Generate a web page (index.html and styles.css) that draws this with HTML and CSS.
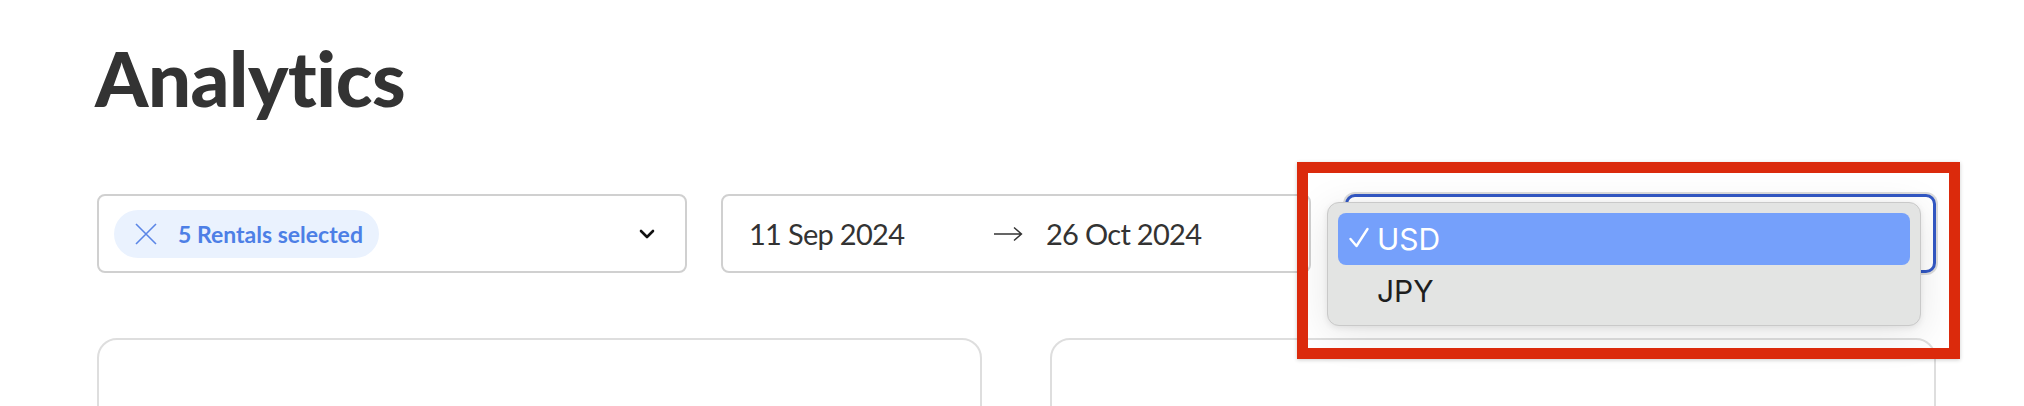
FILE: index.html
```html
<!DOCTYPE html>
<html lang="en">
<head>
<meta charset="utf-8">
<title>Analytics</title>
<link rel="stylesheet" href="styles.css">
</head>
<body>
<main class="page">
  <h1 class="title">Analytics</h1>
  <div class="filters">
    <div class="field multi">
      <span class="chip">
        <svg class="chip-x" width="22" height="22" viewBox="0 0 22 22"><path d="M1 1 L21 21 M21 1 L1 21" stroke="#5b86e6" stroke-width="1.6" fill="none"/></svg>
        <span class="chip-text">5 Rentals selected</span>
      </span>
      <svg class="chevron" width="16" height="10" viewBox="0 0 16 10"><path d="M2 2 L8 8 L14 2" stroke="#111" stroke-width="2.6" fill="none" stroke-linecap="round" stroke-linejoin="round"/></svg>
    </div>
    <div class="field dates">
      <span class="date from">11 Sep 2024</span>
      <svg class="arrow" width="30" height="16" viewBox="0 0 30 16"><path d="M1 8 H28 M21 1.5 L28.5 8 L21 14.5" stroke="#333" stroke-width="1.4" fill="none"/></svg>
      <span class="date to">26 Oct 2024</span>
    </div>
    <div class="select-wrap">
      <div class="field select"></div>
      <div class="menu">
        <div class="menu-item active">
          <svg class="check" width="22" height="22" viewBox="0 0 22 22"><path d="M2.5 13 L8.5 20 L19.5 3" stroke="#fff" stroke-width="2.4" fill="none" stroke-linecap="round" stroke-linejoin="round"/></svg>
          <span>USD</span>
        </div>
        <div class="menu-item">
          <span>JPY</span>
        </div>
      </div>
      <div class="annotation"></div>
    </div>
  </div>
  <div class="cards">
    <section class="card"></section>
    <section class="card"></section>
  </div>
</main>
</body>
</html>
```

FILE: styles.css
```css
html, body {
  margin: 0;
  padding: 0;
  background: #fff;
  overflow: hidden;
}

body {
  font-family: "Lato", "Noto Sans", sans-serif;
  color: #333;
}

.page {
  width: 1839px;
  margin-left: 97px;
}

.title {
  margin: 30px 0 0 -2px;
  font-size: 76px;
  line-height: 96px;
  font-weight: 900;
  color: #333;
  letter-spacing: -0.4px;
}

.filters {
  margin-top: 68px;
  display: grid;
  grid-template-columns: 590px 590px 591px;
  column-gap: 34px;
}

.field {
  box-sizing: border-box;
  height: 79px;
  border: 2px solid #d0d0d0;
  border-radius: 8px;
  background: #fff;
  display: flex;
  align-items: center;
}

.multi {
  padding: 0 30px 0 15px;
  justify-content: space-between;
}

.chip {
  display: flex;
  align-items: center;
  height: 48px;
  padding: 0 16px 0 21px;
  border-radius: 24px;
  background: #eaf2fe;
  gap: 21px;
}

.chip-text {
  font-size: 23px;
  font-weight: 700;
  color: #4d7fe6;
}

.chevron {
  display: block;
}

.dates {
  padding: 0 26px;
}

.date {
  font-size: 29px;
  letter-spacing: -0.7px;
  color: #333;
}

.date.from {
  width: 244px;
}

.arrow {
  display: block;
  margin-right: 23px;
}

.select-wrap {
  position: relative;
}

.select {
  border: 3px solid #3358c4;
  border-radius: 10px;
  box-shadow: 0 0 0 2px #dcdcdc;
}

.menu {
  position: absolute;
  left: -18px;
  top: 8px;
  box-sizing: border-box;
  width: 594px;
  height: 124px;
  padding: 10px;
  background: #e3e4e3;
  border: 1px solid #c9c9c9;
  border-radius: 12px;
  box-shadow: 0 8px 40px rgba(0, 0, 0, 0.10), 0 2px 6px rgba(0, 0, 0, 0.08);
  z-index: 2;
}

.menu-item {
  height: 52px;
  display: flex;
  align-items: center;
  padding-left: 39px;
  font-family: "Inter", "Liberation Sans", sans-serif;
  font-size: 30px;
  color: #1e1e1e;
  border-radius: 8px;
  position: relative;
}

.menu-item.active {
  background: #75a0fb;
  color: #fff;
}

.check {
  position: absolute;
  left: 10px;
  top: 13px;
}

.annotation {
  position: absolute;
  left: -48px;
  top: -32px;
  box-sizing: border-box;
  width: 663px;
  height: 197px;
  border: 11px solid #db2a0c;
  box-shadow: 0 1px 4px rgba(0, 0, 0, 0.2);
  z-index: 3;
  pointer-events: none;
}

.cards {
  margin-top: 65px;
  display: grid;
  grid-template-columns: 885px 886px;
  column-gap: 68px;
}

.card {
  height: 300px;
  border: 2px solid #dedede;
  border-radius: 20px;
  background: #fff;
}
```
